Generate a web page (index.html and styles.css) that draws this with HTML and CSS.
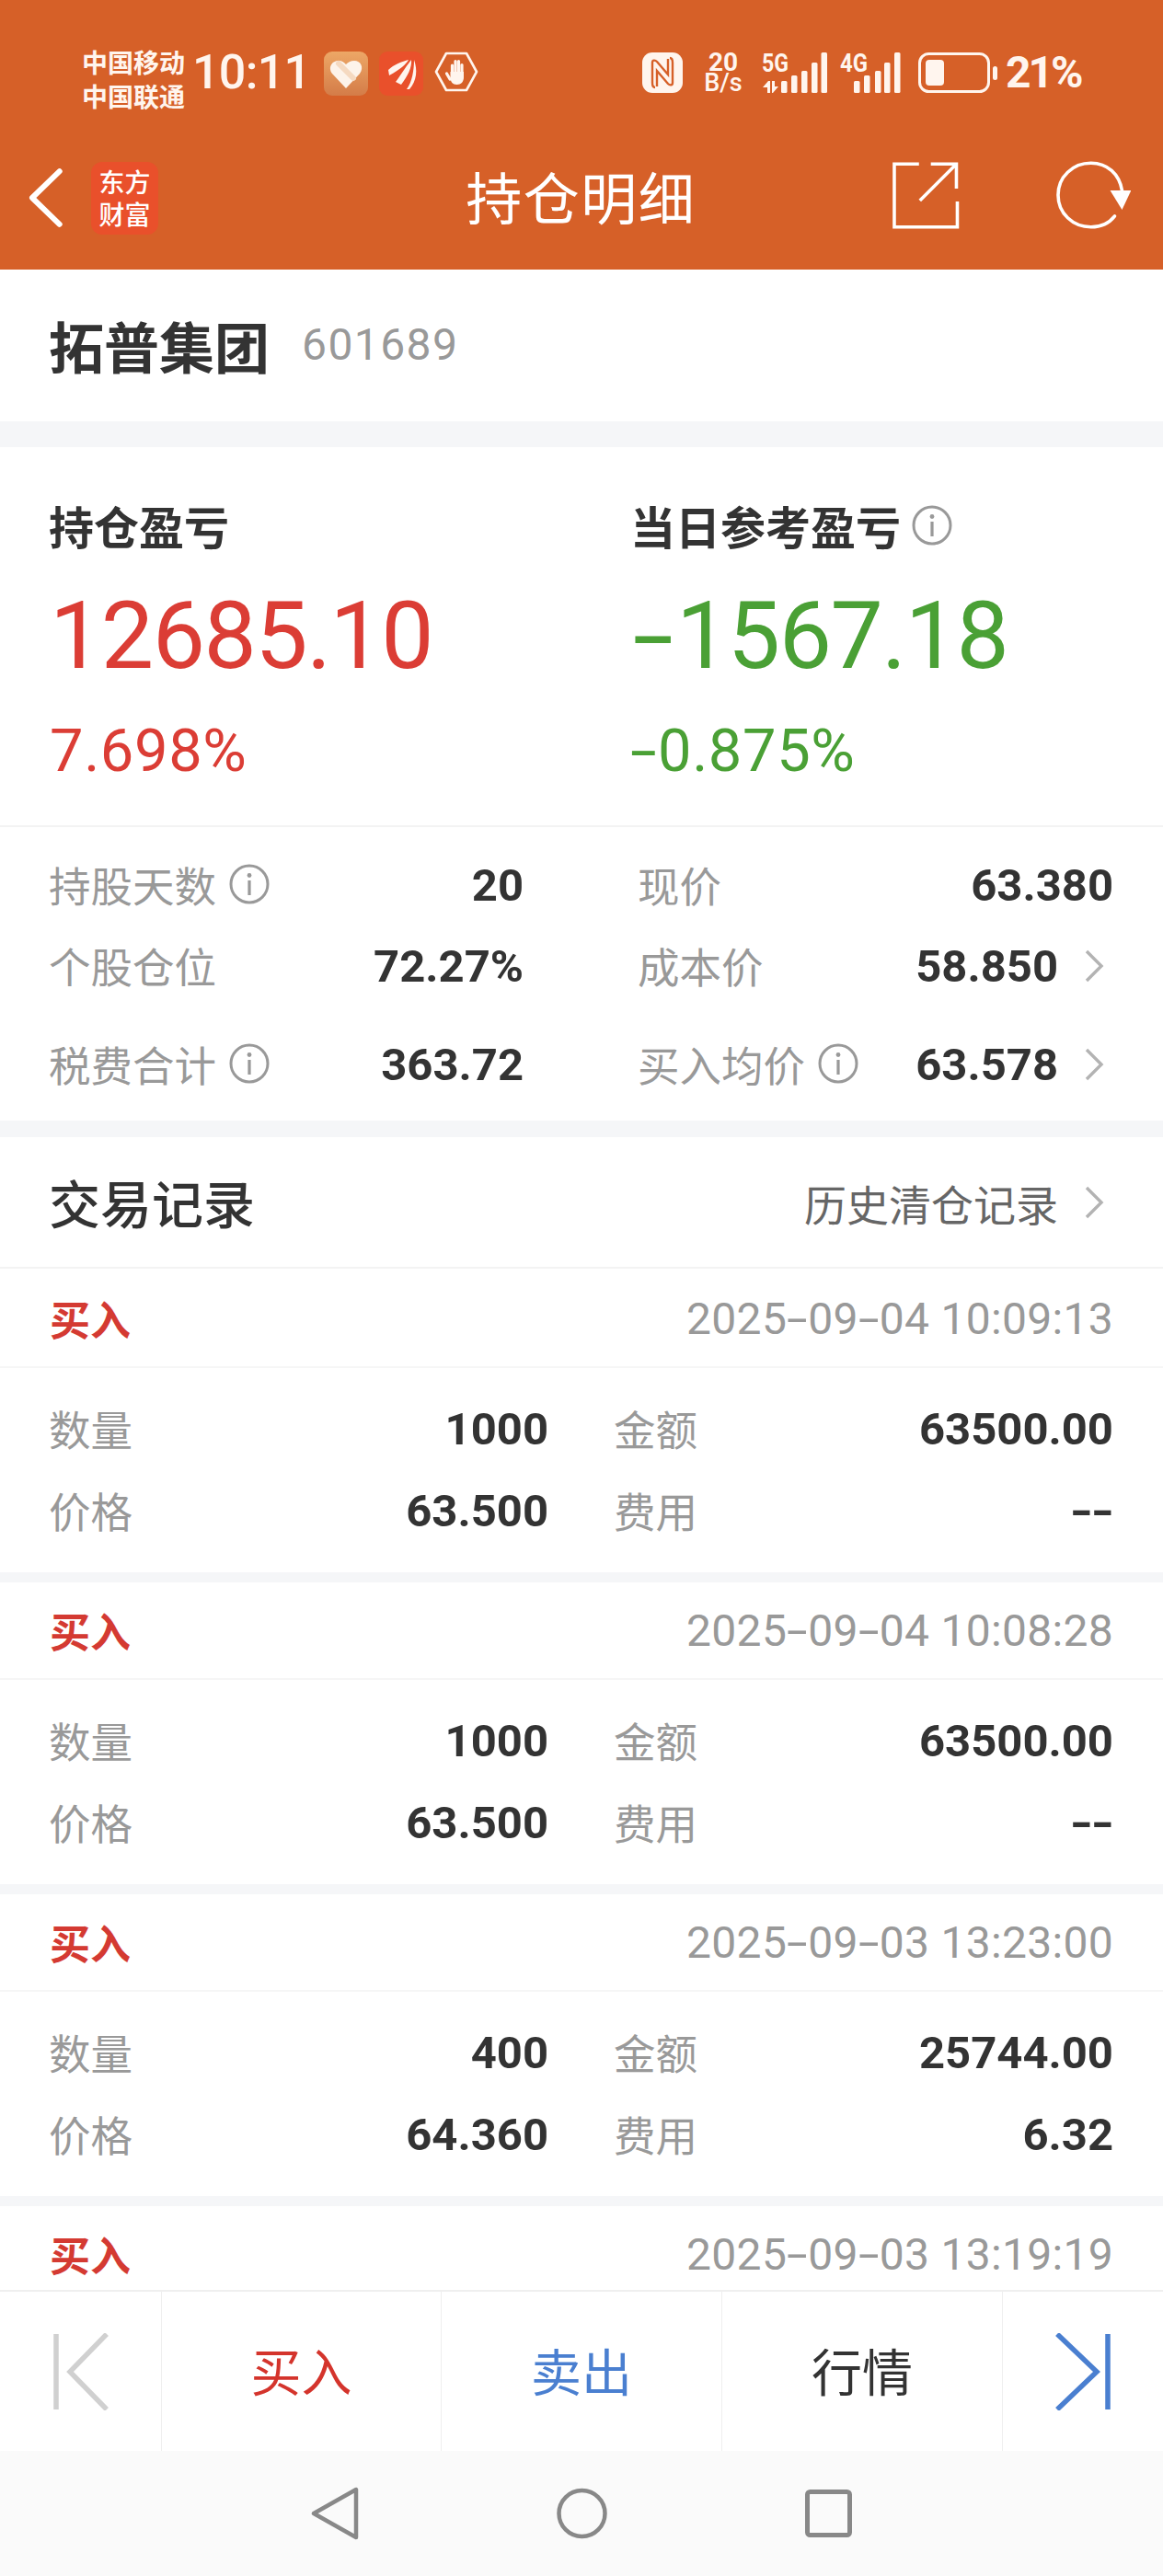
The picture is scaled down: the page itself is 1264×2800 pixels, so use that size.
FILE: index.html
```html
<!DOCTYPE html>
<html lang="zh-CN">
<head>
  <meta charset="UTF-8">
  <title>持仓明细</title>
  <meta name="viewport" content="width=device-width, initial-scale=1">
  <link rel="stylesheet" href="styles.css">
</head>
<body>
<div class="phone">

  <header class="top">
    <div class="status">
      <div class="carrier"><span>中国移动</span><span>中国联通</span></div>
      <div class="time">10:11</div>
      <svg class="app-icon heart" width="48" height="48" viewBox="0 0 48 48">
        <defs><linearGradient id="hg" x1="0" y1="0" x2="0" y2="1"><stop offset="0" stop-color="#eda766"/><stop offset="1" stop-color="#d47c48"/></linearGradient></defs>
        <rect width="48" height="48" rx="9" fill="url(#hg)"/>
        <path d="M24 40 L9 24 C4 17 9 10 16 10 C20 10 22 12 24 14 C26 12 29 10 33 10 C40 10 44 17 39 24 Z" fill="#fdf3ea"/>
        <path d="M16 13 L32 29" stroke="#f5d9c0" stroke-width="6" stroke-linecap="round"/>
      </svg>
      <svg class="app-icon" width="48" height="48" viewBox="0 0 48 48">
        <rect width="48" height="48" rx="9" fill="#e9502b"/>
        <path d="M10 20 C16 14 25 11 32 9 C29 14 24 19 11 26 Z M18 33 C22 28 28 18 35 9 C36 17 31 27 24 36 Z M30 41 C36 33 38 20 38 9 C42 20 41 32 33 41 Z" fill="#fff5ee"/>
      </svg>
      <svg class="app-icon" width="48" height="44" viewBox="0 0 48 44">
        <path d="M13 2 H35 L46 22 L35 42 H13 L2 22 Z" fill="none" stroke="#fff5ee" stroke-width="2.6" stroke-linejoin="round"/>
        <path d="M19.5 25 V15 M23 25 V10.5 M26.5 25 V10.5 M30 25 V14.5 M17 30 L13.5 24" fill="none" stroke="#fff5ee" stroke-width="3.2" stroke-linecap="round"/>
        <path d="M17.5 22 H32 V28 C32 33 29 36 24.5 36 C20 36 17.5 33 17.5 28 Z" fill="#fff5ee"/>
      </svg>

      <div class="status-right">
        <svg width="44" height="44" viewBox="0 0 44 44">
          <rect width="44" height="44" rx="11" fill="#fff5ee"/>
          <path d="M14 38 C11 38 11 35 11 33 V11 C11 8 14 8 16 10 L28 24 V7 M30 6 C33 6 33 9 33 11 V33 C33 36 30 36 28 34 L16 20 V37" fill="none" stroke="#d66028" stroke-width="2.4"/>
        </svg>
        <div class="speed"><span>20</span><span class="speed-unit">B/s</span></div>
        <svg class="signal signal-5g" width="72" height="44" viewBox="0 0 72 44">
          <text x="0" y="21" class="net-label" textLength="29" lengthAdjust="spacingAndGlyphs">5G</text>
          <path d="M1 38 L7 31 H9 V44 H6 V38 Z M11 31 H14 V37 H18 L12 44 H11 Z" fill="#fff5ee"/>
          <rect x="21" y="31" width="6.5" height="13" rx="1.5" fill="#fff5ee"/>
          <rect x="32" y="25" width="6.5" height="19" rx="1.5" fill="#fff5ee"/>
          <rect x="43" y="20" width="6.5" height="24" rx="1.5" fill="#fff5ee"/>
          <rect x="54" y="11" width="6.5" height="33" rx="1.5" fill="#fff5ee"/>
          <rect x="64.5" y="0" width="6.5" height="44" rx="1.5" fill="#fff5ee"/>
        </svg>
        <svg class="signal signal-4g" width="66" height="44" viewBox="0 0 66 44">
          <text x="0" y="21" class="net-label" textLength="30" lengthAdjust="spacingAndGlyphs">4G</text>
          <rect x="15" y="31" width="6.5" height="13" rx="1.5" fill="#fff5ee"/>
          <rect x="26" y="25" width="6.5" height="19" rx="1.5" fill="#fff5ee"/>
          <rect x="38" y="20" width="6.5" height="24" rx="1.5" fill="#fff5ee"/>
          <rect x="48" y="11" width="6.5" height="33" rx="1.5" fill="#fff5ee"/>
          <rect x="59" y="0" width="6.5" height="44" rx="1.5" fill="#fff5ee"/>
        </svg>
        <svg class="battery" width="86" height="44" viewBox="0 0 86 44">
          <rect x="1.5" y="1.5" width="75" height="41" rx="10" fill="none" stroke="#fff5ee" stroke-width="3"/>
          <rect x="8" y="8" width="20" height="28" rx="4" fill="#fff5ee"/>
          <rect x="81" y="15" width="5" height="15" rx="2.5" fill="#fff5ee"/>
        </svg>
        <div class="battery-num">21%</div>
      </div>
    </div>

    <nav class="nav">
      <svg class="nav-back" width="38" height="64" viewBox="0 0 38 64">
        <path d="M34 3 L4 32 L34 61" fill="none" stroke="#fff" stroke-width="6" stroke-linecap="round" stroke-linejoin="round"/>
      </svg>
      <div class="brand"><span>东方</span><span>财富</span></div>
      <h1 class="nav-title">持仓明细</h1>
      <svg class="nav-share" width="74" height="74" viewBox="0 0 74 74">
        <path d="M30 3 H3 V72 H72 V44 M43 3 H71 V30 M71 3 L31 43" fill="none" stroke="#fff" stroke-width="3.6"/>
      </svg>
      <svg class="nav-refresh" width="82" height="74" viewBox="0 0 82 74">
        <path d="M64 60 C57 69 48 72 38 72 C18 72 2 57 2 37 C2 17 18 2 38 2 C56 2 69 14 72 32" fill="none" stroke="#fff" stroke-width="3.6" stroke-linecap="round"/>
        <path d="M59 32 H82 L72 53 Z" fill="#fff"/>
      </svg>
    </nav>
  </header>

  <main class="content">
    <section class="stock">
      <span class="stock-name">拓普集团</span>
      <span class="stock-code">601689</span>
    </section>

    <section class="pnl">
      <div class="pnl-col">
        <div class="pnl-title">持仓盈亏</div>
        <div class="pnl-value up">12685.10</div>
        <div class="pnl-pct up">7.698%</div>
      </div>
      <div class="pnl-col">
        <div class="pnl-title">当日参考盈亏
          <svg class="info" width="44" height="44" viewBox="0 0 44 44"><circle cx="22" cy="22" r="20" fill="none" stroke="#999" stroke-width="3"/><circle cx="22" cy="12.5" r="2.4" fill="#999"/><rect x="20.4" y="18" width="3.2" height="16" fill="#999"/></svg>
        </div>
        <div class="pnl-value down"><span class="dash dash-big">-</span>1567.18</div>
        <div class="pnl-pct down"><span class="dash dash-pct">-</span>0.875%</div>
      </div>
    </section>

    <section class="detail">
      <div class="cell cell-a">
        <span class="label">持股天数
          <svg class="info" width="44" height="44" viewBox="0 0 44 44"><circle cx="22" cy="22" r="20" fill="none" stroke="#999" stroke-width="3"/><circle cx="22" cy="12.5" r="2.4" fill="#999"/><rect x="20.4" y="18" width="3.2" height="16" fill="#999"/></svg>
        </span>
        <span class="num">20</span>
      </div>
      <div class="cell cell-a">
        <span class="label">现价</span>
        <span class="num">63.380</span>
      </div>
      <div class="cell cell-b">
        <span class="label">个股仓位</span>
        <span class="num">72.27%</span>
      </div>
      <div class="cell cell-b">
        <span class="label">成本价</span>
        <span class="num">58.850
          <svg class="arrow" width="22" height="36" viewBox="0 0 22 36"><path d="M3 2 L19 18 L3 34" fill="none" stroke="#b3b3b3" stroke-width="3.4"/></svg>
        </span>
      </div>
      <div class="cell cell-c">
        <span class="label">税费合计
          <svg class="info" width="44" height="44" viewBox="0 0 44 44"><circle cx="22" cy="22" r="20" fill="none" stroke="#999" stroke-width="3"/><circle cx="22" cy="12.5" r="2.4" fill="#999"/><rect x="20.4" y="18" width="3.2" height="16" fill="#999"/></svg>
        </span>
        <span class="num">363.72</span>
      </div>
      <div class="cell cell-c">
        <span class="label">买入均价
          <svg class="info" width="44" height="44" viewBox="0 0 44 44"><circle cx="22" cy="22" r="20" fill="none" stroke="#999" stroke-width="3"/><circle cx="22" cy="12.5" r="2.4" fill="#999"/><rect x="20.4" y="18" width="3.2" height="16" fill="#999"/></svg>
        </span>
        <span class="num">63.578
          <svg class="arrow" width="22" height="36" viewBox="0 0 22 36"><path d="M3 2 L19 18 L3 34" fill="none" stroke="#b3b3b3" stroke-width="3.4"/></svg>
        </span>
      </div>
    </section>

    <section class="records">
      <div class="records-head">
        <span class="records-title">交易记录</span>
        <span class="records-link">历史清仓记录
          <svg class="arrow" width="22" height="36" viewBox="0 0 22 36"><path d="M3 2 L19 18 L3 34" fill="none" stroke="#b3b3b3" stroke-width="3.4"/></svg>
        </span>
      </div>

      <article class="record">
        <div class="record-head"><span class="record-type">买入</span><span class="record-time">2025<span class="dash dash-date">-</span>09<span class="dash dash-date">-</span>04 10:09:13</span></div>
        <div class="record-body">
          <div class="cell"><span class="label">数量</span><span class="num">1000</span></div>
          <div class="cell"><span class="label">金额</span><span class="num">63500.00</span></div>
          <div class="cell"><span class="label">价格</span><span class="num">63.500</span></div>
          <div class="cell"><span class="label">费用</span><span class="num"><span class="dash dash-num">-</span><span class="dash dash-num">-</span></span></div>
        </div>
      </article>

      <article class="record">
        <div class="record-head"><span class="record-type">买入</span><span class="record-time">2025<span class="dash dash-date">-</span>09<span class="dash dash-date">-</span>04 10:08:28</span></div>
        <div class="record-body">
          <div class="cell"><span class="label">数量</span><span class="num">1000</span></div>
          <div class="cell"><span class="label">金额</span><span class="num">63500.00</span></div>
          <div class="cell"><span class="label">价格</span><span class="num">63.500</span></div>
          <div class="cell"><span class="label">费用</span><span class="num"><span class="dash dash-num">-</span><span class="dash dash-num">-</span></span></div>
        </div>
      </article>

      <article class="record">
        <div class="record-head"><span class="record-type">买入</span><span class="record-time">2025<span class="dash dash-date">-</span>09<span class="dash dash-date">-</span>03 13:23:00</span></div>
        <div class="record-body">
          <div class="cell"><span class="label">数量</span><span class="num">400</span></div>
          <div class="cell"><span class="label">金额</span><span class="num">25744.00</span></div>
          <div class="cell"><span class="label">价格</span><span class="num">64.360</span></div>
          <div class="cell"><span class="label">费用</span><span class="num">6.32</span></div>
        </div>
      </article>

      <article class="record">
        <div class="record-head"><span class="record-type">买入</span><span class="record-time">2025<span class="dash dash-date">-</span>09<span class="dash dash-date">-</span>03 13:19:19</span></div>
      </article>
    </section>
  </main>

  <div class="tabs">
    <div class="tab tab-edge">
      <svg width="60" height="84" viewBox="0 0 60 84"><path d="M3 1 V83 M58 1 L18 42 L58 83" fill="none" stroke="#d0d0d0" stroke-width="5.5"/></svg>
    </div>
    <div class="tab buy">买入</div>
    <div class="tab sell">卖出</div>
    <div class="tab quote">行情</div>
    <div class="tab tab-edge">
      <svg width="60" height="84" viewBox="0 0 60 84"><path d="M57 1 V83 M2 1 L45 42 L2 83" fill="none" stroke="#4a7fd0" stroke-width="5.5"/></svg>
    </div>
  </div>

  <div class="sysnav">
    <svg width="52" height="58" viewBox="0 0 52 58"><path d="M49 3 V55 L3 29 Z" fill="none" stroke="#888" stroke-width="4.5" stroke-linejoin="round"/></svg>
    <svg width="55" height="56" viewBox="0 0 55 56"><circle cx="27.5" cy="28" r="25" fill="none" stroke="#888" stroke-width="4.5"/></svg>
    <svg width="51" height="52" viewBox="0 0 51 52"><rect x="2.5" y="2.5" width="46" height="47" rx="3" fill="none" stroke="#888" stroke-width="5"/></svg>
  </div>

</div>
</body>
</html>
```

FILE: styles.css
```css
* {
  box-sizing: border-box;
}
body {
  margin: 0;
  background: #fff;
  font-family: "Noto Sans CJK SC", "Noto Sans", sans-serif;
  color: #333;
}
.phone {
  width: 1264px;
  height: 2800px;
  display: flex;
  flex-direction: column;
  overflow: hidden;
}

/* top bar */
.top {
  height: 293px;
  flex: none;
  background: #d66028;
  color: #fff;
}
.status {
  height: 130px;
  padding: 49px 90px 0 89px;
  display: flex;
  align-items: flex-start;
  color: #fff5ee;
}
.carrier {
  width: 120px;
  display: flex;
  flex-direction: column;
  font-size: 28px;
  line-height: 37px;
  font-weight: 700;
}
.time {
  font-family: Roboto, sans-serif;
  font-size: 52px;
  line-height: 60px;
  font-weight: 500;
  width: 143px;
  letter-spacing: -0.7px;
}
.app-icon {
  margin-top: 7px;
  margin-right: 12px;
}
.status-right {
  margin-left: auto;
  display: flex;
  align-items: flex-start;
  margin-top: 8px;
}
.speed {
  margin-left: 21px;
  width: 46px;
  display: flex;
  flex-direction: column;
  align-items: center;
  font-family: Roboto, sans-serif;
  font-weight: 700;
  font-size: 28px;
  line-height: 22px;
}
.speed-unit {
  font-size: 27px;
  font-weight: 500;
}
.signal {
  overflow: visible;
}
.signal-5g {
  margin-left: 19px;
}
.signal-4g {
  margin-left: 13px;
}
.battery {
  margin-left: 19px;
}
.net-label {
  font-family: Roboto, sans-serif;
  font-weight: 700;
  font-size: 27px;
  fill: #fff5ee;
}
.battery-num {
  margin-left: 9px;
  width: 81px;
  font-family: Roboto, sans-serif;
  font-weight: 700;
  font-size: 48px;
  line-height: 44px;
  letter-spacing: -3px;
  white-space: nowrap;
}
.nav {
  height: 163px;
  display: flex;
  align-items: center;
  padding: 0 35px 0 31px;
}
.nav-back {
  margin-top: 7px;
}
.brand {
  margin-left: 30px;
  margin-top: 7px;
  width: 74px;
  height: 79px;
  border-radius: 12px;
  background: #e9502b;
  display: flex;
  flex-direction: column;
  align-items: center;
  justify-content: center;
  font-size: 28px;
  line-height: 35px;
  font-weight: 500;
}
.nav-title {
  flex: none;
  width: 248px;
  white-space: nowrap;
  margin: 3px 0 0 334px;
  font-size: 61px;
  line-height: 80px;
  font-weight: 400;
  letter-spacing: 1.5px;
}
.nav-share {
  margin-left: 215px;
  margin-top: 1px;
}
.nav-refresh {
  margin-left: 105px;
  margin-top: 1px;
}

/* scrolling part */
.content {
  flex: 1;
  overflow: hidden;
  background: #f5f6f8;
}
.stock {
  height: 165px;
  background: #fff;
  padding: 0 54px 3px 53px;
  display: flex;
  align-items: center;
}
.stock-name {
  font-size: 60px;
  font-weight: 700;
}
.stock-code {
  margin-left: 35px;
  font-family: Roboto, sans-serif;
  font-size: 48px;
  color: #999;
  letter-spacing: 1.4px;
}
.pnl {
  margin-top: 28px;
  height: 413px;
  background: #fff;
  border-bottom: 2px solid #f3f3f3;
  padding: 50px 54px 0;
  display: grid;
  grid-template-columns: 632px 1fr;
}
.pnl-title {
  font-size: 49px;
  line-height: 70px;
  font-weight: 700;
  display: flex;
  align-items: center;
  gap: 12px;
  margin-left: -1px;
}
.pnl-value {
  margin-top: 30px;
  font-family: Roboto, sans-serif;
  font-size: 102px;
  line-height: 110px;
  letter-spacing: -1.5px;
}
.pnl-pct {
  margin-top: 34px;
  font-family: Roboto, sans-serif;
  font-size: 65px;
  line-height: 72px;
  letter-spacing: 0.6px;
}
.up {
  color: #db3d35;
}
.down {
  color: #4aa035;
}

/* the app's minus sign is much longer than the font's hyphen */
.dash {
  display: inline-block;
  text-align: center;
}
.dash-big {
  width: 45px;
  margin-right: 4px;
  transform: scaleX(1.58);
}
.dash-pct {
  width: 28px;
  margin-right: 1px;
  transform: scaleX(1.6);
}
.dash-date {
  width: 23px;
  transform: scaleX(1.7);
}
.dash-num {
  width: 23px;
  transform: scaleX(1.35);
}

.detail {
  height: 319px;
  background: #fff;
  padding: 36px 54px 0;
  display: grid;
  grid-template-columns: 515px 516px;
  column-gap: 125px;
  grid-auto-rows: min-content;
}
.cell {
  display: flex;
  justify-content: space-between;
  align-items: center;
  height: 54px;
}
.cell-b {
  margin-top: 34px;
}
.cell-c {
  margin-top: 53px;
}
.label {
  font-size: 45.5px;
  color: #999;
  display: flex;
  align-items: center;
  gap: 14px;
  line-height: 54px;
  padding-bottom: 2px;
  margin-left: -1px;
}
.num {
  font-family: Roboto, sans-serif;
  font-size: 49px;
  font-weight: 700;
  color: #333;
  display: flex;
  align-items: center;
}
.arrow {
  margin-left: 28px;
  margin-right: 10px;
}

.records {
  margin-top: 18px;
  background: #f5f6f8;
}
.records-head {
  height: 143px;
  background: #fff;
  padding: 0 54px;
  display: flex;
  justify-content: space-between;
  align-items: center;
  border-bottom: 2px solid #f3f3f3;
}
.records-title {
  font-size: 56px;
  font-weight: 500;
  padding-bottom: 3px;
  margin-left: -1px;
}
.records-link {
  font-size: 46px;
  color: #666;
  display: flex;
  align-items: center;
}
.record {
  background: #fff;
  margin-bottom: 11px;
}
.records-head + .record {
  padding-top: 2px;
}
.record-head {
  height: 106px;
  padding: 0 54px;
  display: flex;
  justify-content: space-between;
  align-items: center;
  border-bottom: 2px solid #f6f6f6;
}
.record-type {
  font-size: 44px;
  font-weight: 700;
  color: #d43a32;
}
.record-time {
  font-family: Roboto, sans-serif;
  font-size: 48px;
  color: #999;
  white-space: nowrap;
  letter-spacing: 0.3px;
}
.record-body {
  height: 222px;
  padding: 39px 54px 0;
  display: grid;
  grid-template-columns: 542px 542px;
  column-gap: 72px;
  row-gap: 35px;
  grid-auto-rows: min-content;
}

/* bottom */
.tabs {
  height: 175px;
  flex: none;
  background: #fff;
  border-top: 2px solid #efefef;
  display: grid;
  grid-template-columns: 175px 304px 305px 305px 1fr;
}
.tab {
  display: flex;
  align-items: center;
  justify-content: center;
  font-size: 55px;
  padding-bottom: 5px;
  border-left: 1px solid #efefef;
}
.tab:first-child {
  border-left: none;
}
.tab-edge {
  padding-bottom: 0;
}
.buy {
  color: #d4342c;
}
.sell {
  color: #4a7fd0;
}
.quote {
  color: #333;
}
.sysnav {
  height: 136px;
  flex: none;
  background: #fafafa;
  display: flex;
  align-items: center;
  justify-content: center;
  gap: 215px;
}
```
